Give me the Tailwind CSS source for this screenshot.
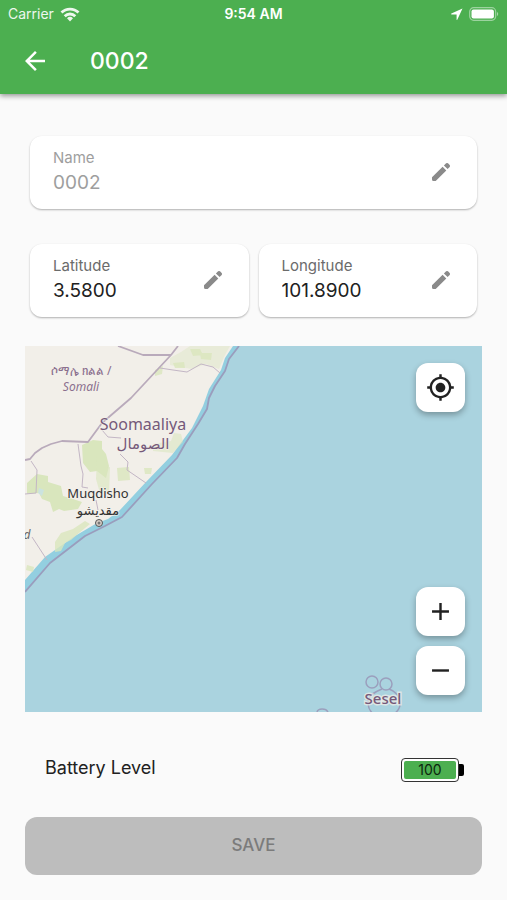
<!DOCTYPE html>
<html lang="en">

<head>
  <meta charset="UTF-8">
  <meta name="viewport" content="width=device-width, initial-scale=1.0">
  <title>0002</title>
  <script src="https://cdn.jsdelivr.net/npm/@tailwindcss/browser@4"></script>
</head>

<body class="min-h-lvh bg-[#fafafa] font-['Inter','Noto_Sans',sans-serif] text-[#212121]">
  <header class="relative bg-[#4caf50] text-white shadow-[0_2px_5px_rgba(0,0,0,0.4)]">
    <!-- Status bar -->
    <div class="grid h-7 grid-cols-3 items-center px-2 text-sm">
      <div class="flex items-center gap-1.5 opacity-90">
        <span>Carrier</span>
        <svg class="h-[15px] w-5" viewBox="0 0 20 15" fill="none" stroke="currentColor" stroke-width="2.8">
          <path d="M1.5 5.6a12 12 0 0 1 17 0M4.7 9.2a7.5 7.5 0 0 1 10.6 0" />
          <path d="M10 14.5l-3-3.2a4.3 4.3 0 0 1 6 0z" fill="currentColor" stroke="none" />
        </svg>
      </div>
      <span class="text-center font-semibold">9:54 AM</span>
      <div class="flex items-center justify-end gap-1.5">
        <svg class="size-3" viewBox="0 0 12 12" fill="currentColor">
          <path d="M11.5.5L.4 5.6c-.5.3-.4.8.2.8h5v5c0 .6.6.7.8.2z" />
        </svg>
        <svg class="h-[14px] w-[30px]" viewBox="0 0 30 14">
          <rect x=".7" y=".7" width="26" height="12.6" rx="4" fill="none" stroke="#fff" stroke-opacity=".45" stroke-width="1.2" />
          <rect x="2.5" y="2.5" width="22.4" height="9" rx="2" fill="#fff" />
          <path d="M28 5v4c1.6-.6 1.6-3.4 0-4z" fill="#fff" fill-opacity=".5" />
        </svg>
      </div>
    </div>
    <!-- App bar -->
    <div class="flex h-[66px] items-center gap-10 px-5">
      <button type="button" aria-label="Back">
        <svg class="size-[30px]" viewBox="0 0 24 24" fill="currentColor">
          <path d="M20 11H7.83l5.59-5.59L12 4l-8 8 8 8 1.41-1.41L7.83 13H20v-2z" />
        </svg>
      </button>
      <h1 class="text-[23px] font-medium">0002</h1>
    </div>
  </header>

  <main class="px-[25px] pt-[42px] pb-6">
    <form>
      <div class="mx-[5px] grid grid-cols-2 gap-x-2.5 gap-y-[35px]">
        <div class="col-span-2 flex items-center rounded-xl bg-white pt-3 pr-6 pb-3.5 pl-[23px] text-[#9e9e9e] shadow-[0_1px_2px_rgba(0,0,0,0.3)]">
          <div class="min-w-0 grow">
            <label for="name" class="block text-[15px] leading-5">Name</label>
            <input id="name" type="text" value="0002" disabled class="mt-[3px] block h-6 w-full text-[19px] leading-6">
          </div>
          <button type="button" aria-label="Edit name" class="shrink-0 text-[#8a8a8a]">
            <svg class="size-6" viewBox="0 0 24 24" fill="currentColor">
              <path d="M3 17.3v2.2Q3 21 4.500 21h2.200L17.300 10.400 13.600 6.700zM14.900 5.400l2.200-2.100q1-.8 1.900 0l1.700 1.700q.8 1 0 1.900l-2.100 2.200z" />
            </svg>
          </button>
        </div>
        <div class="flex items-center rounded-xl bg-white pt-3 pr-6 pb-3.5 pl-[23px] shadow-[0_1px_2px_rgba(0,0,0,0.3)]">
          <div class="min-w-0 grow">
            <label for="latitude" class="block text-[15px] leading-5 text-[#6b6b6b]">Latitude</label>
            <input id="latitude" type="text" value="3.5800" class="mt-[3px] block h-6 w-full text-[19px] leading-6">
          </div>
          <button type="button" aria-label="Edit latitude" class="shrink-0 text-[#8a8a8a]">
            <svg class="size-6" viewBox="0 0 24 24" fill="currentColor">
              <path d="M3 17.3v2.2Q3 21 4.500 21h2.200L17.300 10.400 13.600 6.700zM14.900 5.400l2.200-2.100q1-.8 1.900 0l1.700 1.700q.8 1 0 1.900l-2.100 2.200z" />
            </svg>
          </button>
        </div>
        <div class="flex items-center rounded-xl bg-white pt-3 pr-6 pb-3.5 pl-[23px] shadow-[0_1px_2px_rgba(0,0,0,0.3)]">
          <div class="min-w-0 grow">
            <label for="longitude" class="block text-[15px] leading-5 text-[#6b6b6b]">Longitude</label>
            <input id="longitude" type="text" value="101.8900" class="mt-[3px] block h-6 w-full text-[19px] leading-6">
          </div>
          <button type="button" aria-label="Edit longitude" class="shrink-0 text-[#8a8a8a]">
            <svg class="size-6" viewBox="0 0 24 24" fill="currentColor">
              <path d="M3 17.3v2.2Q3 21 4.500 21h2.200L17.300 10.400 13.600 6.700zM14.900 5.400l2.200-2.100q1-.8 1.900 0l1.700 1.700q.8 1 0 1.900l-2.100 2.200z" />
            </svg>
          </button>
        </div>
      </div>

      <!-- Map -->
      <div class="relative mt-[29px]">
        <svg class="block w-full font-['Noto_Sans','DejaVu_Sans',sans-serif]" viewBox="0 0 457 366">
          <rect width="457" height="366" fill="#aad3df" />
          <!-- territorial water -->
          <path d="M0 0H214L204 13 200 25 190 40 184 52 182 63 173 78 160 98 152 112 127 138 97 171 80 180 60 190 25 217 0 246z" fill="#93cfe0" />
          <!-- land -->
          <path d="M0 0H208L200 12 196 24 184 43 178 60 167 82 147 109 121 136 95 164 83 173 72 177 50 190 20 211 0 234z" fill="#f2efe9" />
          <g fill="#d9e6bd">
            <path d="M57 99l11-5 9 1v8l4 5 3 12-3 12-9-7-7 1-7-9z" />
            <path d="M72 110l7 0 5 15-1 20-8 2-4-14zM80 122l5-1-1 25-4 1z" opacity=".6" />
            <path d="M92 122l12-1 1 13-12 1zM119 122l8 0-1 6-6 0z" opacity=".8" />
            <path d="M128 98l18-3 3-8 7 1 2 8-10 11-20-2z" opacity=".55" />
            <path d="M145 12l11-6 9-6 40 0-6 11-5 12-13-5-14 5-12-2-10-2z" opacity=".4" />
            <path d="M165 3l10 0 3 6-10 1zM175 7l12 0-1 7-10-1zM148 17l11-1 1 6-10 0zM130 24l8-4-1 8-7 2z" opacity=".8" />
            <path d="M2 137l10-9 11 2v6l13 4 2 10 10 3 9 3-4 7-14 2-5-2-6 3-3-10-8-3-3-6-12 1z" />
            <path d="M30 196l6-9 12-4 12-8 5 3-11 9-8 7-6 3-4 8-6 1zM2 219l7 2-1 5-7-2z" opacity=".8" />
          </g>
          <path d="M14 142l5 2-2 6-4-3z" fill="#cbe3df" />
          <g fill="none" stroke="#c3b6c5" stroke-width="1">
            <path d="M135 22L148 24 162 26 176 18 188 21 195 27M53 98L56 120 58 128 57 141 63 142M77 84L83 91 96 92M95 108L103 116 102 124 121 137M6 115L12 124 11 147 0 148M71 154L73 164 M7 191L22 214" />
          </g>
          <path d="M93 0L118 9H146L106 52 77 77 63 96 37 95 26 98 17 102 10 107 5 113 0 114M146 9L153 0" fill="none" stroke="#b9aabb" stroke-width="1.800" stroke-linejoin="round" />
          <path d="M214 0L204 13 200 25 190 40 184 52 182 63 173 78 160 98 152 112 127 138 97 171 80 180 60 190 25 217 0 246" fill="none" stroke="#9a9dbd" stroke-width="1.800" stroke-linejoin="round" />
          <!-- islands -->
          <g fill="none" stroke="#9b9fbd" stroke-width="1.5">
            <circle cx="347" cy="336" r="6" />
            <circle cx="361" cy="338" r="6" />
            <path d="M357 343c-8 3-15 8-14 15 1 9 8 13 16 13s17-6 16-15c-1-7-5-11-11-13M292 366c1-4 9-4 11 0" />
          </g>
          <g text-anchor="middle" stroke="#f2efe9" stroke-width="2" stroke-opacity=".7" paint-order="stroke">
            <text x="56" y="29" font-size="12" fill="#8b6f8e">ሶማሌ ክልል /</text>
            <text x="56" y="45" font-size="12" font-style="italic" fill="#8b6f8e">Somali</text>
            <text x="118" y="84" font-size="16" fill="#75597a">Soomaaliya</text>
            <text x="118" y="103" font-size="15" fill="#75597a">الصومال</text>
            <text x="73" y="152" font-size="13" fill="#333">Muqdisho</text>
            <text x="73" y="169" font-size="13" fill="#333">مقديشو</text>
            <text x="2" y="193" font-size="12" font-style="italic" fill="#666">d</text>
            <text x="358" y="358" font-size="15" font-weight="500" fill="#75597a" stroke-width="3">Sesel</text>
          </g>
          <circle cx="74" cy="177" r="3.5" fill="#d9d0c9" stroke="#555" stroke-width="1" />
          <circle cx="74" cy="177" r="1.5" fill="#777" />
        </svg>
        <div class="absolute inset-y-[17px] right-[17px] flex flex-col gap-2.5">
          <button type="button" aria-label="My location" class="mb-auto flex size-[49px] items-center justify-center rounded-xl bg-white shadow-[0_3px_6px_rgba(0,0,0,0.3)]">
            <svg class="size-[29px]" viewBox="0 0 24 24" fill="currentColor">
              <path d="M12 8c-2.21 0-4 1.79-4 4s1.79 4 4 4 4-1.79 4-4-1.79-4-4-4zm8.94 3A8.994 8.994 0 0 0 13 3.06V1h-2v2.06A8.994 8.994 0 0 0 3.06 11H1v2h2.06A8.994 8.994 0 0 0 11 20.94V23h2v-2.06A8.994 8.994 0 0 0 20.94 13H23v-2h-2.06zM12 19c-3.87 0-7-3.13-7-7s3.13-7 7-7 7 3.13 7 7-3.13 7-7 7z" />
            </svg>
          </button>
          <button type="button" aria-label="Zoom in" class="flex size-[49px] items-center justify-center rounded-xl bg-white shadow-[0_3px_6px_rgba(0,0,0,0.3)]">
            <svg class="size-[29px]" viewBox="0 0 24 24" fill="currentColor">
              <path d="M19 13h-6v6h-2v-6H5v-2h6V5h2v6h6v2z" />
            </svg>
          </button>
          <button type="button" aria-label="Zoom out" class="flex size-[49px] items-center justify-center rounded-xl bg-white shadow-[0_3px_6px_rgba(0,0,0,0.3)]">
            <svg class="size-[29px]" viewBox="0 0 24 24" fill="currentColor">
              <path d="M19 13H5v-2h14v2z" />
            </svg>
          </button>
        </div>
      </div>

      <!-- Battery -->
      <div class="mt-10 flex h-8 items-center justify-between pr-[18px] pl-5">
        <span class="text-lg">Battery Level</span>
        <div class="mt-1 flex items-center">
          <div class="rounded-[4px] border border-[#333] bg-white p-0.5">
            <div class="flex h-[18px] w-[52px] items-center justify-center rounded-xs bg-[#4caf50] text-sm text-[#0d260e]">100</div>
          </div>
          <div class="h-3 w-[5px] rounded-r-xs bg-black"></div>
        </div>
      </div>

      <button type="submit" disabled class="mt-[33px] h-[58px] w-full rounded-xl bg-[#bdbdbd] text-[17px] font-medium text-[#7b7b7b]">SAVE</button>
    </form>
  </main>
</body>

</html>
